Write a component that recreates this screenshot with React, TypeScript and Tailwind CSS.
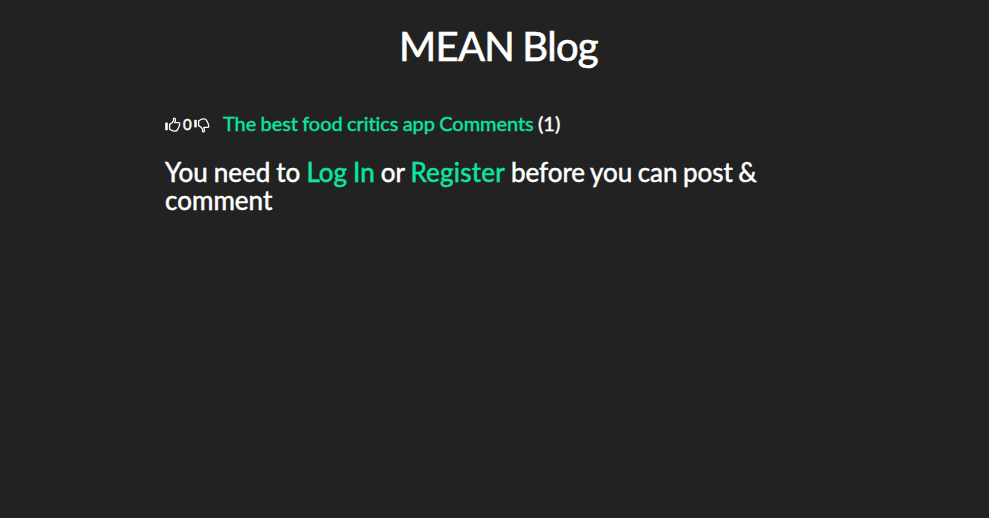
function ThumbIcon({ down = false }: { down?: boolean }) {
  return (
    <svg viewBox="0 0 16 16" className={down ? "h-4 w-4 -scale-y-100" : "h-4 w-4"} fill="none" stroke="currentColor" aria-hidden="true">
      <path d="M0.2 5.6h2.6v7.6H0.2z" fill="currentColor" stroke="none" />
      <path d="M4.6 7.4 7.1 5.8 8.5 3.6V2Q8.7 0.9 9.5 1.1 10.7 1.4 10.4 3.4L9.8 5.7H13.4Q14.9 5.8 14.8 7 14.5 9.4 12.5 12.6 11.7 14.1 10.1 14.1 7.6 14.1 6.1 13L4.6 12.1Z" strokeWidth="1.3" strokeLinejoin="round" />
    </svg>
  );
}

export default function App() {
  return (
    <main className="min-h-screen bg-[#222] px-[165px] pt-[24px] font-['Lato',sans-serif] text-white [font-variant-ligatures:none]">
      <h1 className="pl-[8px] text-center text-[40px] leading-[45px] tracking-[-0.65px] [word-spacing:-1.5px] [-webkit-text-stroke:0.7px]">MEAN Blog</h1>
      <div className="mt-[40px] flex h-[28px] items-center">
        <span className="mt-[3px]"><ThumbIcon /></span>
        <span className="mt-[2px] ml-[2px] w-[9px] text-[15px] [-webkit-text-stroke:0.5px]">0</span>
        <span className="mt-[4px] ml-[2px]"><ThumbIcon down /></span>
        <p className="ml-[13px] text-[20px] whitespace-nowrap tracking-[-0.04px] [word-spacing:-0.8px] [-webkit-text-stroke:0.4px]">
          <a className="text-[#0be6a3]">The best food critics app</a> <a className="text-[#0be6a3]">Comments</a> (1)
        </p>
      </div>
      <h3 className="mt-[21px] w-[620px] text-[26px] leading-[28px] tracking-[0.03px] [word-spacing:-0.7px] [-webkit-text-stroke:0.5px]">
        You need to <a className="text-[#0be6a3]">Log In</a> or <a className="tracking-[0.25px] text-[#0be6a3]">Register</a> <span className="tracking-[-0.05px] [word-spacing:-1px]">before you can post &amp;</span> comment
      </h3>
    </main>
  );
}
